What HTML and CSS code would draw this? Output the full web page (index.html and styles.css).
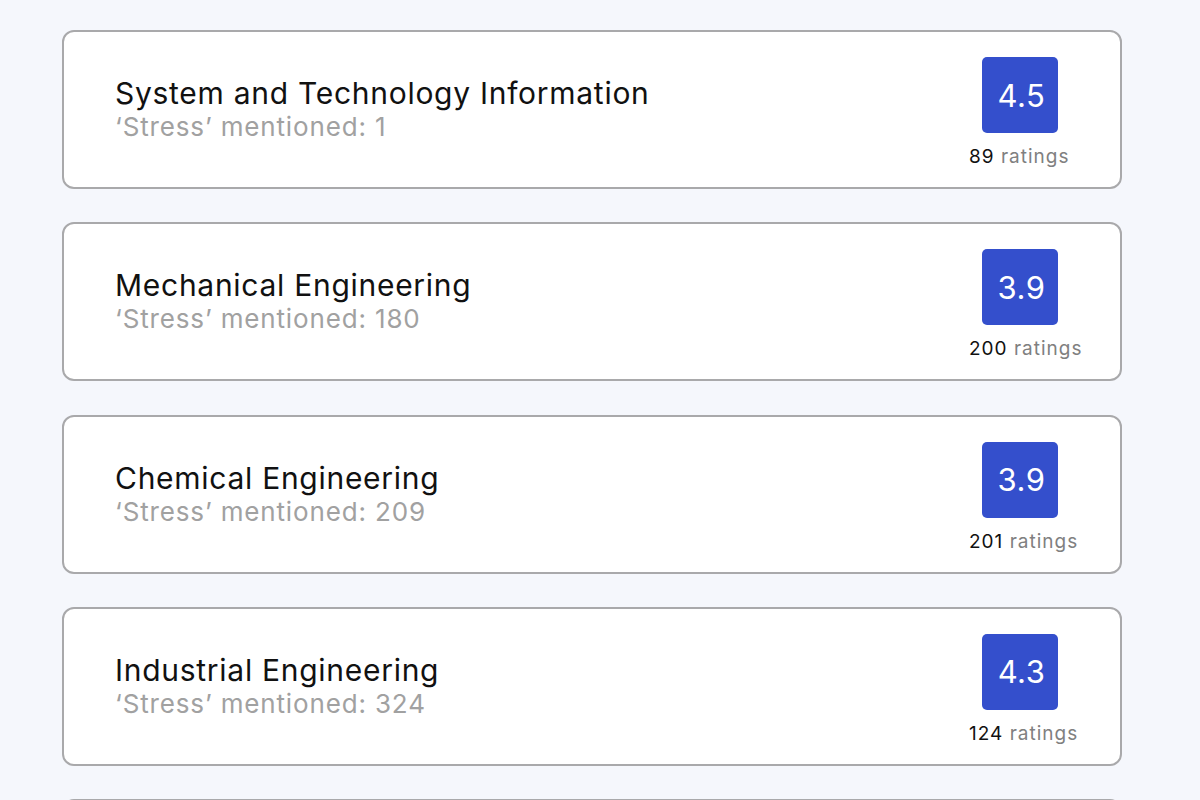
FILE: index.html
```html
<!DOCTYPE html>
<html>
<head>
<meta charset="utf-8">
<link rel="stylesheet" href="styles.css">
</head>
<body>
<div class="list">
  <div class="card">
    <div class="info">
      <div class="title">System and Technology Information</div>
      <div class="sub">‘Stress’ mentioned: 1</div>
    </div>
    <div class="score">
      <div class="badge">4.5</div>
      <div class="count"><span class="num">89</span> ratings</div>
    </div>
  </div>
  <div class="card">
    <div class="info">
      <div class="title">Mechanical Engineering</div>
      <div class="sub">‘Stress’ mentioned: 180</div>
    </div>
    <div class="score">
      <div class="badge">3.9</div>
      <div class="count"><span class="num">200</span> ratings</div>
    </div>
  </div>
  <div class="card">
    <div class="info">
      <div class="title">Chemical Engineering</div>
      <div class="sub">‘Stress’ mentioned: 209</div>
    </div>
    <div class="score">
      <div class="badge">3.9</div>
      <div class="count"><span class="num">201</span> ratings</div>
    </div>
  </div>
  <div class="card">
    <div class="info">
      <div class="title">Industrial Engineering</div>
      <div class="sub">‘Stress’ mentioned: 324</div>
    </div>
    <div class="score">
      <div class="badge">4.3</div>
      <div class="count"><span class="num">124</span> ratings</div>
    </div>
  </div>
  <div class="card">
    <div class="info">
      <div class="title">Civil Engineering</div>
      <div class="sub">‘Stress’ mentioned: 150</div>
    </div>
    <div class="score">
      <div class="badge">4.1</div>
      <div class="count"><span class="num">150</span> ratings</div>
    </div>
  </div>
</div>
</body>
</html>
```
FILE: styles.css
```css
html, body {
  margin: 0;
  padding: 0;
  background: #f5f7fc;
  font-family: Inter, "Noto Sans", sans-serif;
  overflow: hidden;
  height: 800px;
}
.list {
  display: flex;
  flex-direction: column;
  gap: 33.3px;
  padding: 30px 78px 0 62px;
}
.card {
  box-sizing: border-box;
  height: 159px;
  flex-shrink: 0;
  background: #ffffff;
  border: 2px solid #a9a9ab;
  border-radius: 12px;
  display: flex;
  align-items: flex-start;
  justify-content: space-between;
  padding: 25px 49px 0 51px;
}
.info {
  align-self: center;
  display: flex;
  flex-direction: column;
  margin-top: -24px;
}
.title {
  font-size: 30px;
  line-height: 34px;
  letter-spacing: 0.72px;
  color: #111111;
}
.sub {
  font-size: 26px;
  line-height: 34px;
  letter-spacing: 0.85px;
  color: #a1a1a1;
}
.score {
  width: 102px;
  display: flex;
  flex-direction: column;
  align-items: flex-start;
}
.badge {
  align-self: center;
  width: 76px;
  height: 76px;
  border-radius: 5px;
  background: #344fcc;
  color: #ffffff;
  font-size: 31px;
  letter-spacing: 0.5px;
  display: flex;
  align-items: center;
  justify-content: center;
  padding-left: 3px;
  box-sizing: border-box;
}
.count {
  margin-top: 11px;
  font-size: 19px;
  line-height: 26px;
  letter-spacing: 1px;
  white-space: nowrap;
  color: #808080;
}
.num {
  color: #111111;
}
```
